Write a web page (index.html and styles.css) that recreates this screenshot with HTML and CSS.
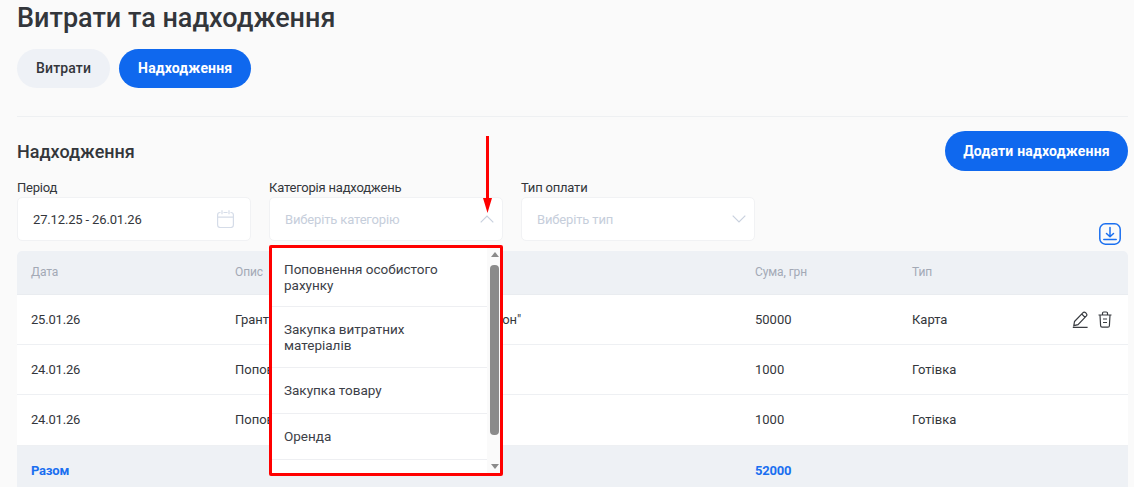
FILE: index.html
```html
<!DOCTYPE html>
<html lang="uk">
<head>
<meta charset="utf-8">
<title>Витрати та надходження</title>
<link rel="stylesheet" href="styles.css">
</head>
<body>
<main class="page">
  <h1 class="title">Витрати та надходження</h1>
  <div class="tabs">
    <button class="tab">Витрати</button>
    <button class="tab tab-active">Надходження</button>
  </div>
  <hr class="divider">
  <div class="section-head">
    <h2 class="section-title">Надходження</h2>
    <button class="add-btn">Додати надходження</button>
  </div>
  <div class="filters">
    <div class="filter">
      <label class="filter-label">Період</label>
      <div class="field">
        <span class="field-value">27.12.25 - 26.01.26</span>
        <svg class="icon-cal" width="17" height="18" viewBox="0 0 17 18" fill="none" stroke="#d5dce8" stroke-width="1.2"><path d="M3.500 2.500H3A2.400 2.400 0 0 0 .6 4.900v10.200A2.400 2.400 0 0 0 3 17.500h11a2.400 2.400 0 0 0 2.400-2.400V4.900A2.400 2.400 0 0 0 14 2.500h-.5M6.500 2.500h4M.6 7.200h15.800M5 .3v4M12 .3v4"/></svg>
      </div>
    </div>
    <div class="filter filter-cat">
      <label class="filter-label">Категорія надходжень</label>
      <div class="field">
        <span class="field-placeholder">Виберіть категорію</span>
        <svg width="14" height="8" viewBox="0 0 14 8" fill="none" stroke="#c9d1de" stroke-width="1.2"><path d="M.7 7.300 7 1l6.300 6.300"/></svg>
      </div>
      <div class="dropdown">
        <ul class="options">
          <li class="option option-first">Поповнення особистого рахунку</li>
          <li class="option option-two">Закупка витратних матеріалів</li>
          <li class="option option-one">Закупка товару</li>
          <li class="option option-one">Оренда</li>
        </ul>
        <div class="scrollbar">
          <span class="sb-up"></span>
          <span class="sb-thumb"></span>
          <span class="sb-down"></span>
        </div>
      </div>
      <svg class="arrow" width="9" height="77" viewBox="0 0 9 77"><path d="M3 0h3v62h3l-4.500 15L0 62h3z" fill="#f00"/></svg>
    </div>
    <div class="filter">
      <label class="filter-label">Тип оплати</label>
      <div class="field">
        <span class="field-placeholder">Виберіть тип</span>
        <svg width="14" height="8" viewBox="0 0 14 8" fill="none" stroke="#c9d1de" stroke-width="1.2"><path d="M.7.700 7 7l6.300-6.300"/></svg>
      </div>
    </div>
    <button class="download" aria-label="Завантажити">
      <svg width="22" height="22" viewBox="0 0 22 22" fill="none" stroke="#1a6ff0" stroke-width="1.500"><rect x=".8" y=".8" width="20.400" height="20.400" rx="5.500"/><path d="M11 4.500v9M7.500 10.500l3.500 3.300 3.500-3.300M4.800 16.500h12.400" stroke-linecap="round" stroke-linejoin="round"/></svg>
    </button>
  </div>
  <div class="table">
    <div class="row row-head">
      <span>Дата</span><span>Опис</span><span>Сума, грн</span><span>Тип</span><span></span>
    </div>
    <div class="row">
      <span class="date">25.01.26</span><span>Грант на розвиток місцевої організації "Регіон"</span><span>50000</span><span>Карта</span>
      <span class="actions">
        <svg width="16" height="17" viewBox="0 0 16 17" fill="none" stroke="#3a3d42" stroke-width="1.200"><path d="M2.500 10.500 10.800 1.800a2 2 0 0 1 2.800-.1l.6.600a2 2 0 0 1 0 2.800L6 13.700l-4.200 1zM9.700 3l3.600 3.600M.8 16.400h14.800"/></svg>
        <svg width="14" height="17" viewBox="0 0 14 17" fill="none" stroke="#3a3d42" stroke-width="1.200"><path d="M.5 4h13M4.500 4V2.200A1.200 1.200 0 0 1 5.700 1h2.600a1.200 1.200 0 0 1 1.200 1.200V4M2 4l.6 10.800A1.500 1.500 0 0 0 4.100 16.200h5.800a1.500 1.500 0 0 0 1.500-1.400L12 4M5 8h4M5 11.500h4"/></svg>
      </span>
    </div>
    <div class="row">
      <span class="date">24.01.26</span><span>Поповнення особистого рахунку</span><span>1000</span><span>Готівка</span><span></span>
    </div>
    <div class="row row-last">
      <span class="date">24.01.26</span><span>Поповнення особистого рахунку</span><span>1000</span><span>Готівка</span><span></span>
    </div>
    <div class="row row-total">
      <span>Разом</span><span></span><span>52000</span><span></span><span></span>
    </div>
  </div>
</main>
</body>
</html>
```
FILE: styles.css
```css
* { box-sizing: border-box; }
html, body { margin: 0; height: 487px; overflow: hidden; }
body { background: #fafafa; font-family: Roboto, "Liberation Sans", sans-serif; color: #33363b; }
.page { width: 1111px; margin-left: 17px; }
.title { margin: 0; font-size: 27px; line-height: 36px; font-weight: 500; color: #33363b; }
.tabs { display: flex; gap: 9px; margin-top: 13px; }
.tab { height: 39px; padding: 0 19px; border: 0; border-radius: 20px; background: #eef1f6; color: #33363b; font: 500 14px/39px Roboto, sans-serif; letter-spacing: .15px; }
.tab-active { background: #0f68ee; color: #fff; font-weight: 700; }
.divider { margin: 28px 0 0; border: 0; border-top: 1px solid #eef0f2; }
.section-head { display: flex; justify-content: space-between; align-items: center; margin-top: 14px; height: 40px; }
.section-title { margin: 0; font-size: 18px; font-weight: 500; color: #33363b; }
.add-btn { height: 40px; width: 183px; border: 0; border-radius: 20px; background: #0f68ee; color: #fff; font: 700 14px Roboto, sans-serif; letter-spacing: .2px; }
.filters { display: flex; gap: 18px; margin-top: 9px; position: relative; }
.filter { width: 234px; position: relative; }
.filter-label { display: block; font-size: 13px; line-height: 16px; letter-spacing: -.2px; height: 17px; }
.field { height: 44px; display: flex; align-items: center; justify-content: space-between; padding: 0 8px 0 15px; background: #fff; border: 1px solid #f1f2f4; border-radius: 5px; font-size: 13px; }
.field-value { letter-spacing: -.15px; }
.field-placeholder { color: #c6cedb; font-size: 13px; letter-spacing: -.15px; }
.icon-cal { margin-right: 8px; }
.download { position: absolute; right: 6px; top: 42px; width: 24px; height: 24px; padding: 0; border: 0; background: none; display: flex; align-items: center; justify-content: center; }
.table { margin-top: 10px; background: #fff; border-radius: 5px 5px 0 0; overflow: hidden; font-size: 13px; }
.row { display: grid; grid-template-columns: 204px 520px 157px 1fr 56px; height: 50px; align-items: center; padding-left: 14px; border-bottom: 1px solid #eef0f3; white-space: nowrap; }
.date { letter-spacing: -.2px; }
.row-head { height: 44px; padding-bottom: 1px; background: #eef1f5; color: #a3a9b5; font-size: 12px; border-bottom: 1px solid #e9ecf0; letter-spacing: -.1px; }
.row-last { height: 51px; padding-bottom: 1px; }
.row-total { height: 50px; padding-bottom: 2px; background: #eef1f5; color: #1a6ff0; font-weight: 700; border: 0; letter-spacing: -.2px; }
.actions { display: flex; align-items: center; gap: 10px; }
.dropdown { position: absolute; left: 0; top: 65px; width: 234px; height: 231px; border: 3px solid #f00; border-radius: 2px; background: #fff; display: flex; z-index: 2; }
.options { flex: 1; list-style: none; margin: 0; padding: 0; overflow: hidden; font-size: 13.500px; line-height: 16px; }
.option { display: flex; align-items: center; height: 46px; padding: 0 40px 0 12px; border-bottom: 1px solid #eeeff2; color: #3c4047; }
.option-first { height: 59px; }
.option-two { height: 61px; }
.option-one { padding-bottom: 2px; }
.scrollbar { width: 13px; background: #fafafa; position: relative; display: flex; flex-direction: column; align-items: flex-end; padding-right: 1px; }
.sb-up, .sb-down { width: 0; height: 0; border-left: 4.500px solid transparent; border-right: 4.500px solid transparent; }
.sb-up { margin-top: 4px; border-bottom: 5px solid #8a8a8a; }
.sb-down { position: absolute; bottom: 4px; border-top: 5px solid #8a8a8a; }
.sb-thumb { width: 9px; height: 170px; margin-top: 8px; background: #8a8a8a; border-radius: 4px; }
.arrow { position: absolute; left: 214px; top: -44px; z-index: 3; }
```
